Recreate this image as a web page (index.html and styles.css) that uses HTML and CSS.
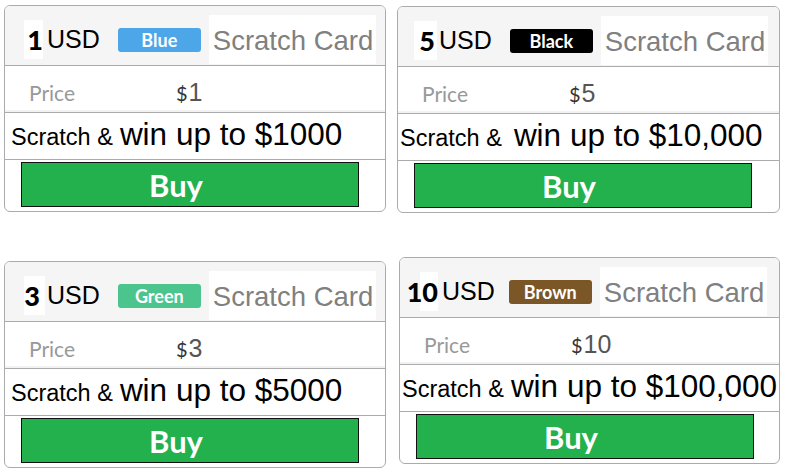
FILE: index.html
```html
<!DOCTYPE html>
<html lang="en">

<head>
    <meta charset="UTF-8">
    <meta name="viewport" content="width=device-width, initial-scale=1.0">
    <title>Scratch Cards</title>
    <link rel="stylesheet" href="styles.css">
</head>

<body>
    <div class="cards">
        <div class="card card--one">
            <div class="card__head">
                <span class="card__num">1</span><span class="card__usd">USD</span>
                <span class="card__badge card__badge--blue">Blue</span>
                <span class="card__title">Scratch Card</span>
            </div>
            <div class="card__price">
                <span class="card__label">Price</span>
                <span class="card__cur">$</span><span class="card__value">1</span>
            </div>
            <div class="card__win">
                <span class="card__small">Scratch &amp;</span>
                <span class="card__big">win up to $1000</span>
            </div>
            <div class="card__foot">
                <button class="card__buy">Buy</button>
            </div>
        </div>

        <div class="card card--five">
            <div class="card__head">
                <span class="card__num">5</span><span class="card__usd">USD</span>
                <span class="card__badge card__badge--black">Black</span>
                <span class="card__title">Scratch Card</span>
            </div>
            <div class="card__price">
                <span class="card__label">Price</span>
                <span class="card__cur">$</span><span class="card__value">5</span>
            </div>
            <div class="card__win">
                <span class="card__small">Scratch &amp;</span>
                <span class="card__big">win up to $10,000</span>
            </div>
            <div class="card__foot">
                <button class="card__buy">Buy</button>
            </div>
        </div>

        <div class="card card--three">
            <div class="card__head">
                <span class="card__num">3</span><span class="card__usd">USD</span>
                <span class="card__badge card__badge--green">Green</span>
                <span class="card__title">Scratch Card</span>
            </div>
            <div class="card__price">
                <span class="card__label">Price</span>
                <span class="card__cur">$</span><span class="card__value">3</span>
            </div>
            <div class="card__win">
                <span class="card__small">Scratch &amp;</span>
                <span class="card__big">win up to $5000</span>
            </div>
            <div class="card__foot">
                <button class="card__buy">Buy</button>
            </div>
        </div>

        <div class="card card--ten">
            <div class="card__head">
                <span class="card__num">10</span><span class="card__usd">USD</span>
                <span class="card__badge card__badge--brown">Brown</span>
                <span class="card__title">Scratch Card</span>
            </div>
            <div class="card__price">
                <span class="card__label">Price</span>
                <span class="card__cur">$</span><span class="card__value">10</span>
            </div>
            <div class="card__win">
                <span class="card__small">Scratch &amp;</span>
                <span class="card__big">win up to $100,000</span>
            </div>
            <div class="card__foot">
                <button class="card__buy">Buy</button>
            </div>
        </div>
    </div>
</body>

</html>
```

FILE: styles.css
```css
* {
    box-sizing: border-box;
}

body {
    margin: 0;
    background: #fff;
    font-family: "Liberation Sans", Arial, sans-serif;
}

.cards {
    display: grid;
    grid-template-columns: 382px 383px;
    column-gap: 11px;
    row-gap: 44px;
    align-items: start;
    padding: 5px 0 0 4px;
}

.card {
    border: 1px solid #ababab;
    border-radius: 6px;
    overflow: hidden;
    background: #fff;
}

.card--five {
    margin-top: 1px;
}

.card--three {
    margin-top: 4px;
}

.card--ten {
    margin-left: 2px;
}

.card__head {
    display: flex;
    align-items: center;
    height: 60px;
    padding: 8px 0 0 19px;
    background: #f5f5f5;
    border-bottom: 1px solid #ababab;
}

.card__num {
    display: flex;
    align-items: center;
    justify-content: flex-end;
    height: 39px;
    background: #fff;
    font: 900 27px "Lato", sans-serif;
    color: #000;
}

.card--one .card__num {
    width: 19px;
}

.card--five .card__num {
    width: 23px;
    margin-left: -3px;
    padding-right: 2px;
}

.card--three .card__num {
    width: 21px;
    padding-right: 5px;
}

.card--ten .card__num {
    width: 28px;
    margin-left: -9px;
    background: linear-gradient(to right, transparent 10px, #fff 10px);
}

.card__usd {
    margin-left: 4px;
    font-size: 25px;
    color: #000;
}

.card--three .card__usd,
.card--five .card__usd {
    margin-left: 2px;
}

.card__badge {
    display: flex;
    align-items: center;
    justify-content: center;
    width: 83px;
    height: 24px;
    margin-left: 18px;
    border-radius: 3px;
    font: bold 18px "Lato", sans-serif;
    color: #fff;
}

.card--ten .card__badge {
    margin-left: 14px;
}

.card__badge--blue {
    background: #4ca6e8;
}

.card__badge--black {
    background: #000;
}

.card__badge--green {
    background: #4cc48e;
}

.card__badge--brown {
    background: #7b5727;
}

.card__title {
    display: flex;
    align-items: center;
    width: 167px;
    height: 49px;
    margin-left: 8px;
    padding: 3px 0 0 4px;
    background: #fff;
    font-size: 27.5px;
    color: #808080;
}

.card__price {
    display: flex;
    align-items: baseline;
    height: 47px;
    padding: 12px 0 0 24px;
    border-bottom: 1px solid #ababab;
    box-shadow: inset 0 -2px 0 #f2f2f2;
}

.card__label {
    width: 147px;
    font: 21px "Lato", sans-serif;
    color: #999;
}

.card__cur {
    font: 20px "Lato", sans-serif;
    color: #333;
}

.card__value {
    margin-left: 1px;
    font-size: 25px;
    color: #555;
}

.card__win {
    display: flex;
    align-items: baseline;
    height: 47px;
    padding: 3px 0 0 6px;
    border-bottom: 1px solid #ababab;
    white-space: nowrap;
    color: #000;
}

.card--five .card__win,
.card--ten .card__win {
    padding-left: 2px;
}

.card__small {
    font-size: 23.5px;
    margin-right: 7px;
}

.card--five .card__small {
    margin-right: 12px;
}

.card__big {
    font-size: 31.5px;
}

.card__foot {
    height: 51px;
    padding: 2px 0 0 16px;
}

.card__buy {
    width: 338px;
    height: 45px;
    padding: 0 28px 0 0;
    border: 1px solid #111;
    background: #23b14d;
    font: bold 31px "Lato", sans-serif;
    color: #fff;
    text-align: center;
    cursor: pointer;
}
```
